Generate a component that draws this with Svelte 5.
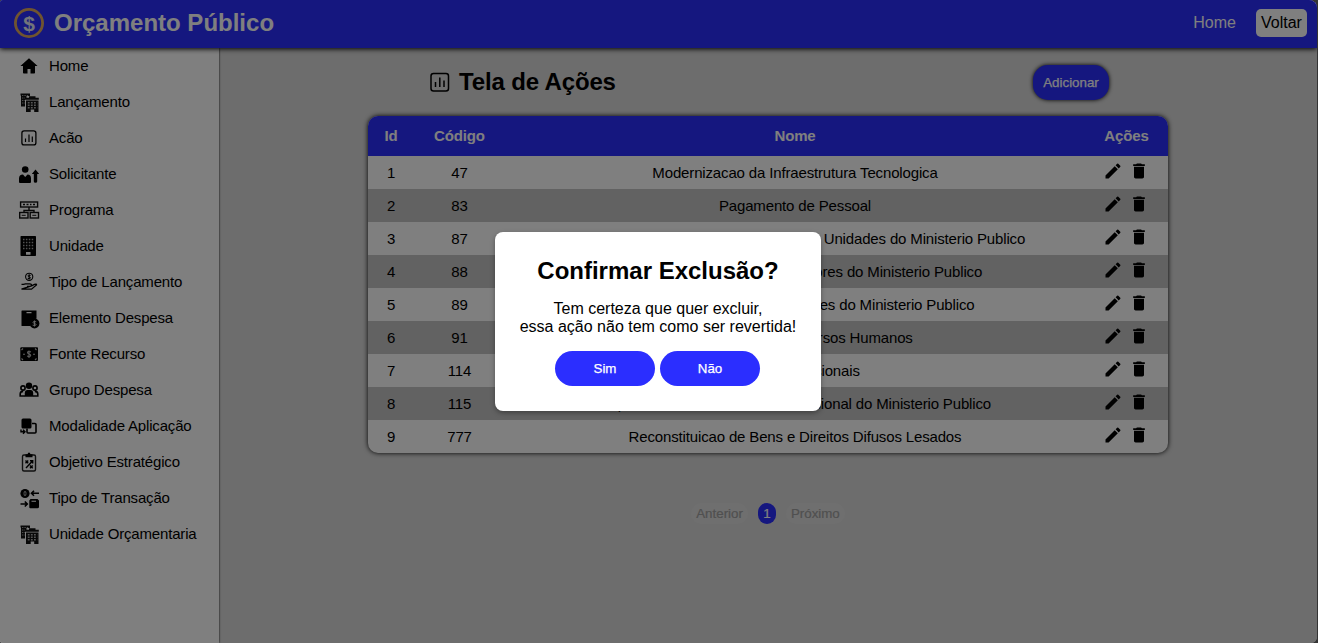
<script>
  const menu = [
    ['home', 'Home'], ['city', 'Lançamento'], ['chart', 'Acão'], ['user', 'Solicitante'],
    ['program', 'Programa'], ['building', 'Unidade'], ['hand', 'Tipo de Lançamento'],
    ['element', 'Elemento Despesa'], ['money', 'Fonte Recurso'], ['group', 'Grupo Despesa'],
    ['modal', 'Modalidade Aplicação'], ['goal', 'Objetivo Estratégico'],
    ['swap', 'Tipo de Transação'], ['city', 'Unidade Orçamentaria']
  ];
  const rows = [
    [1, 47, 'Modernizacao da Infraestrutura Tecnologica'],
    [2, 83, 'Pagamento de Pessoal'],
    [3, 87, 'Construcao Ampliacao e Reformas das Unidades do Ministerio Publico'],
    [4, 88, 'Assistencia a Saude aos Servidores do Ministerio Publico'],
    [5, 89, 'Manutencao Geral das Atividades do Ministerio Publico'],
    [6, 91, 'Capacitacao de Recursos Humanos'],
    [7, 114, 'Acoes Institucionais'],
    [8, 115, 'Capacitacao e Atualizacao Profissional do Ministerio Publico'],
    [9, 777, 'Reconstituicao de Bens e Direitos Difusos Lesados']
  ];
</script>

{#snippet icon(name)}
  <svg class="icon" viewBox="0 0 24 24" width="24" height="24" fill="none" stroke="#000" stroke-width="1.4">
    {#if name === 'home'}
      <path fill="#000" stroke="none" d="M12 4.300 3.400 12H6v6.700q0 .8.800.8h3.700V15h3v4.500h3.700q.8 0 .8-.8V12h2.600z" />
    {:else if name === 'city'}
      <path fill="#111" stroke="none" d="M3.500 3.500H13V6H9.500v2H8v8.500H4V5.500h-.5z" />
      <path stroke="#aaa" stroke-width=".9" stroke-dasharray="1.400 1" d="M5 5.500h7M5 8h3M5 10.500h3M5 13h3" />
      <path fill="#111" stroke="none" d="M12 6.300h6.500v1.500h3.300v2H8v-2h4zM9 10.500h12.500V22h-4.300v-2.500h-3.500V22H9z" />
      <path stroke="#aaa" stroke-width="1.400" stroke-dasharray="1.800 1.300" d="M10.800 12.700h9.500M10.800 15.200h9.500M10.800 17.700h9.500" />
    {:else if name === 'chart'}
      <rect x="4.900" y="4.900" width="14" height="14" rx="2.200" stroke-width="1.300" />
      <path stroke-width="1.200" d="M8.500 12.500V16M12 8.500V16M15.300 10.500V16" />
    {:else if name === 'user'}
      <g fill="#000" stroke="none">
        <circle cx="8.200" cy="7.500" r="3.300" />
        <path d="M2 20v-3.500q0-4 4-4l2.200 2.500 2.300-2.500q3.500 0 3.500 4V20q0 1-1 1H3q-1 0-1-1z" />
        <path d="M18.500 7.500 22.200 12h-2v7.500q0 1.300-1.700 1.300t-1.700-1.300V12h-2z" />
      </g>
    {:else if name === 'program'}
      <g stroke-width="1.400" stroke="#111">
        <rect x="3.600" y="4" width="17" height="5" /><path d="M6 6.500h2M9.500 6.500h2M13 6.500h1.500M16 6.500h2" />
        <path d="M12 9v3.500M7 14.500v-2h10v2" />
        <rect x="2.700" y="14.500" width="8.300" height="5.500" /><rect x="13.200" y="14.500" width="8.300" height="5.500" />
        <path stroke-width="1" d="M4.700 17.300h4M15.300 17.300h4" />
      </g>
    {:else if name === 'building'}
      <rect x="3.500" y="2" width="15.500" height="20" rx=".8" fill="#000" stroke="none" />
      <path stroke="#a5a5a5" stroke-width="1.500" stroke-dasharray="1.500 1.400" d="M6 5.500h10.500M6 8.500h10.500M6 11.500h10.500M6 14.500h10.500" />
      <path fill="#fff" stroke="none" d="M9 18h4.500v2.700H9z" />
    {:else if name === 'hand'}
      <circle cx="12.200" cy="6.800" r="3.600" stroke-width="1.100" />
      <path stroke-width="1" d="M13.600 5.400q-2.700-.7-2.700.5c0 1.300 2.700.8 2.700 2q0 1.300-2.900.5M12.200 4.300v5" />
      <path stroke-width="1.300" d="M4.500 14.300h2l2-.5H13q1.500 0 1.500 1.300T13 16.400h-3M14.500 15.800l3-1.400q2.300-.6 2 .5l-5 4.300h-10z" />
    {:else if name === 'element'}
      <path fill="#000" stroke="none" fill-rule="evenodd" d="M5 4.500h14.500v8L14 15l-1 5H5q-.5 0-.5-.5V5q0-.5.500-.500zM9.500 6v1.200h5V6z" />
      <circle cx="17.500" cy="17.500" r="4.900" fill="#000" stroke="none" />
      <path stroke="#ccc" stroke-width="1" d="M19.200 15.800q-3.300-.8-3.300.5c0 1.500 3.300.9 3.300 2.400q-.2 1.200-3.500.5M17.500 14.500v6" />
    {:else if name === 'money'}
      <rect x="3.300" y="5.200" width="17.700" height="13.700" rx="1" fill="#000" stroke="none" />
      <path stroke="#bbb" stroke-width="1.100" d="M14 9.900q-3.500-1-3.500.7c0 1.800 3.200 1.200 3.200 2.800q0 1.500-3.500.7M12 8.500v7.500M6 12.200h2M16 12.200h2M4.500 8l1.500-1.500M18 6.500 19.500 8M4.500 16.500 6 18M18 18l1.500-1.500" />
    {:else if name === 'group'}
      <g fill="#000" stroke="none"><circle cx="12" cy="7.800" r="3.200" /><path d="M7.800 18.800v-3.500q0-3.300 2.700-3.300h3q2.700 0 2.700 3.300v3.500z" /></g>
      <circle cx="6" cy="10" r="2.100" stroke-width="1.600" /><circle cx="18" cy="10" r="2.100" stroke-width="1.600" />
      <path stroke-width="1.600" d="M8 18H3.200v-2q0-2.600 3-2.600M16 18h4.800v-2q0-2.600-3-2.600" />
    {:else if name === 'modal'}
      <rect x="4.500" y="4.500" width="10" height="10" rx="1.500" fill="#000" stroke="none" />
      <path stroke-width="1.600" d="M15 9.500h3q1 0 1 1V18q0 1-1 1h-7q-1 0-1-1v-3.500" />
      <path d="M4 15.500v2.300h4M6 15.800l2 2-2 2" />
    {:else if name === 'goal'}
      <rect x="5.500" y="5" width="13" height="16" rx="1.500" stroke="#222" />
      <path fill="#000" stroke="none" d="M8.500 4.300h2Q10.800 2.500 12 2.500t1.500 1.800h2v3h-7z" />
      <path stroke-width="1.400" d="m8.500 10.500 2.700 2.700m0-2.700-2.700 2.700M9 18l6.500-7M13 10.700h2.700v2.700M13 15.500l2.700 2.700m0-2.700L13 18.200" />
    {:else if name === 'swap'}
      <ellipse cx="8" cy="7.500" rx="4.600" ry="4.600" fill="#000" stroke="none" />
      <ellipse cx="8" cy="7.500" rx="1" ry="2.300" stroke="#aaa" stroke-width="1" />
      <path stroke-width="1.600" d="M22 7.300h-7.500M17 4.800l-2.500 2.500L17 9.800M3.500 18h6.800M7.800 15.500l2.500 2.500-2.500 2.500" />
      <path fill="#000" stroke="none" fill-rule="evenodd" d="M13.500 13H20.500L22 14.500v6.300q0 1.500-1.500 1.500h-7.200q-1 0-1-1v-6.800zM14.500 14.800v.9H19v-.9z" />
    {/if}
  </svg>
{/snippet}

<div class="window">
  <div class="screen">
    <header>
      <div class="brand">
        <svg width="30" height="30" viewBox="0 0 30 30" fill="none">
          <circle cx="15" cy="15" r="13.600" stroke="#e0a95f" stroke-width="2.800" />
          <text x="15" y="22.500" text-anchor="middle" class="coin">$</text>
        </svg>
        <h1>Orçamento Público</h1>
      </div>
      <nav><a href="#home">Home</a><button class="back">Voltar</button></nav>
    </header>
    <div class="body">
      <aside>
        {#each menu as [name, label]}
          <div class="item">{@render icon(name)}<span>{label}</span></div>
        {/each}
      </aside>
      <main>
        <div class="top">
          <div class="heading">
            <svg width="20" height="20" viewBox="0 0 20 20" fill="none" stroke="#000" stroke-width="1.500">
              <rect x="1" y="1.500" width="17.500" height="17.500" rx="2.500" /><path d="M5.500 10v5M9.800 5.500V15M14 8.500V15" />
            </svg>
            <h2>Tela de Ações</h2>
          </div>
          <button class="add">Adicionar</button>
        </div>
        <div class="table">
          <div class="row head"><span>Id</span><span>Código</span><span>Nome</span><span>Ações</span></div>
          {#each rows as [id, code, name]}
            <div class="row">
              <span>{id}</span><span>{code}</span><span>{name}</span>
              <span class="acts">
                <svg width="20" height="20" viewBox="0 0 24 24"><path d="M3 17.250V21h3.750L17.810 9.940l-3.750-3.750zM20.710 7.040a1 1 0 0 0 0-1.410l-2.340-2.340a1 1 0 0 0-1.410 0l-1.830 1.830 3.750 3.750z" /></svg>
                <svg width="20" height="20" viewBox="0 0 24 24"><path d="M6 19c0 1.100.9 2 2 2h8c1.100 0 2-.9 2-2V7H6zM19 4h-3.500l-1-1h-5l-1 1H5v2h14z" /></svg>
              </span>
            </div>
          {/each}
        </div>
        <div class="pages"><button disabled>Anterior</button><button class="current">1</button><button disabled>Próximo</button></div>
      </main>
    </div>
  </div>
  <div class="overlay">
    <div class="dialog">
      <h2>Confirmar Exclusão?</h2>
      <p>Tem certeza que quer excluir,<br />essa ação não tem como ser revertida!</p>
      <div class="choices"><button>Sim</button><button>Não</button></div>
    </div>
  </div>
</div>

<style>
  :global(body) { background: #343434; overflow: hidden; }
  .window, button { font-family: "Liberation Sans", Arial, sans-serif; }
  .window { position: relative; width: 1317px; height: 643px; border-radius: 3px 8px 6px 3px; overflow: hidden; color: #000; }
  .screen { height: 100%; display: flex; flex-direction: column; background: #dadada; }
  h1, h2, p { margin: 0; }
  button { border: 0; padding: 0; margin: 0; }
  header { height: 48px; flex: none; display: flex; justify-content: space-between; align-items: center; background: #2b2eff; box-shadow: 0 1px 5px #000; padding: 0 10px 0 14px; box-sizing: border-box; z-index: 2; }
  .brand { display: flex; align-items: center; gap: 10px; padding-bottom: 2px; }
  .coin { font: bold 21px "Liberation Sans", Arial, sans-serif; fill: #e4eaf5; }
  h1 { font-size: 24px; line-height: 28px; color: #fff; }
  nav { display: flex; align-items: center; gap: 20px; padding-bottom: 3px; }
  nav a { font-size: 16px; color: #fff; text-decoration: none; }
  .back { width: 51px; height: 28px; font-size: 16px; background: #fff; border-radius: 5px; color: #000; }
  .body { flex: 1; display: flex; min-height: 0; }
  aside { width: 219px; flex: none; background: #fff; box-shadow: 0 0 2px #000; z-index: 1; }
  .item { height: 36px; box-sizing: border-box; display: flex; align-items: center; gap: 8px; padding: 0 0 2px 17px; font-size: 15px; letter-spacing: -.17px; }
  .icon { flex: none; margin-top: 1px; }
  main { flex: 1; display: flex; flex-direction: column; align-items: center; }
  .top { width: 679px; margin: 0 0 16px 3px; display: flex; justify-content: space-between; align-items: center; padding-top: 17px; height: 35px; }
  .heading { display: flex; align-items: center; gap: 9px; padding-bottom: 2px; }
  .heading h2 { letter-spacing: -.15px; }
  h2 { font-size: 24px; line-height: 28px; }
  .add { width: 76px; height: 35px; border-radius: 15px; background: #2b2eff; color: #fff; font-size: 13.330px; box-shadow: 0 0 4px #000; }
  .add, .choices button { -webkit-text-stroke: .25px #fff; }
  .table { width: 800px; border-radius: 10px; overflow: hidden; box-shadow: 0 0 5px #000; background: #fff; font-size: 15px; letter-spacing: -.15px; }
  .row { display: grid; grid-template-columns: 46px 91px 580px 83px; height: 33px; align-items: center; text-align: center; }
  .row:nth-child(odd) { background: #c4c4c4; }
  .row.head { height: 40px; box-sizing: border-box; padding-bottom: 2px; background: #2b2eff; color: #fff; font-weight: bold; }
  .acts { display: flex; justify-content: center; gap: 6px; padding: 0 2px 3px 0; }
  .acts svg { display: block; }
  .pages { display: flex; align-items: center; gap: 10px; margin-top: 50px; }
  .pages button { height: 21px; border-radius: 10px; padding: 0 5px; font-size: 13.330px; background: #dedede; color: #a0a0a0; -webkit-text-stroke: .2px #a0a0a0; }
  .pages .current { width: 18px; background: #2b2eff; color: #fff; -webkit-text-stroke-color: #fff; }
  .overlay { position: absolute; inset: 0; z-index: 5; background: rgba(0,0,0,.5); display: flex; align-items: center; justify-content: center; padding-right: 1px; }
  .dialog { width: 326px; height: 179px; box-sizing: border-box; border-radius: 8px; background: #fff; box-shadow: 0 2px 5px rgba(0,0,0,.35); padding-top: 25px; text-align: center; }
  .dialog p { font-size: 16px; line-height: 18px; margin: 15px 0; }
  .choices { display: flex; justify-content: center; gap: 5px; padding-right: 1px; }
  .choices button { width: 100px; height: 35px; border-radius: 18px; background: #2b2eff; color: #fff; font-size: 13.330px; }
</style>
